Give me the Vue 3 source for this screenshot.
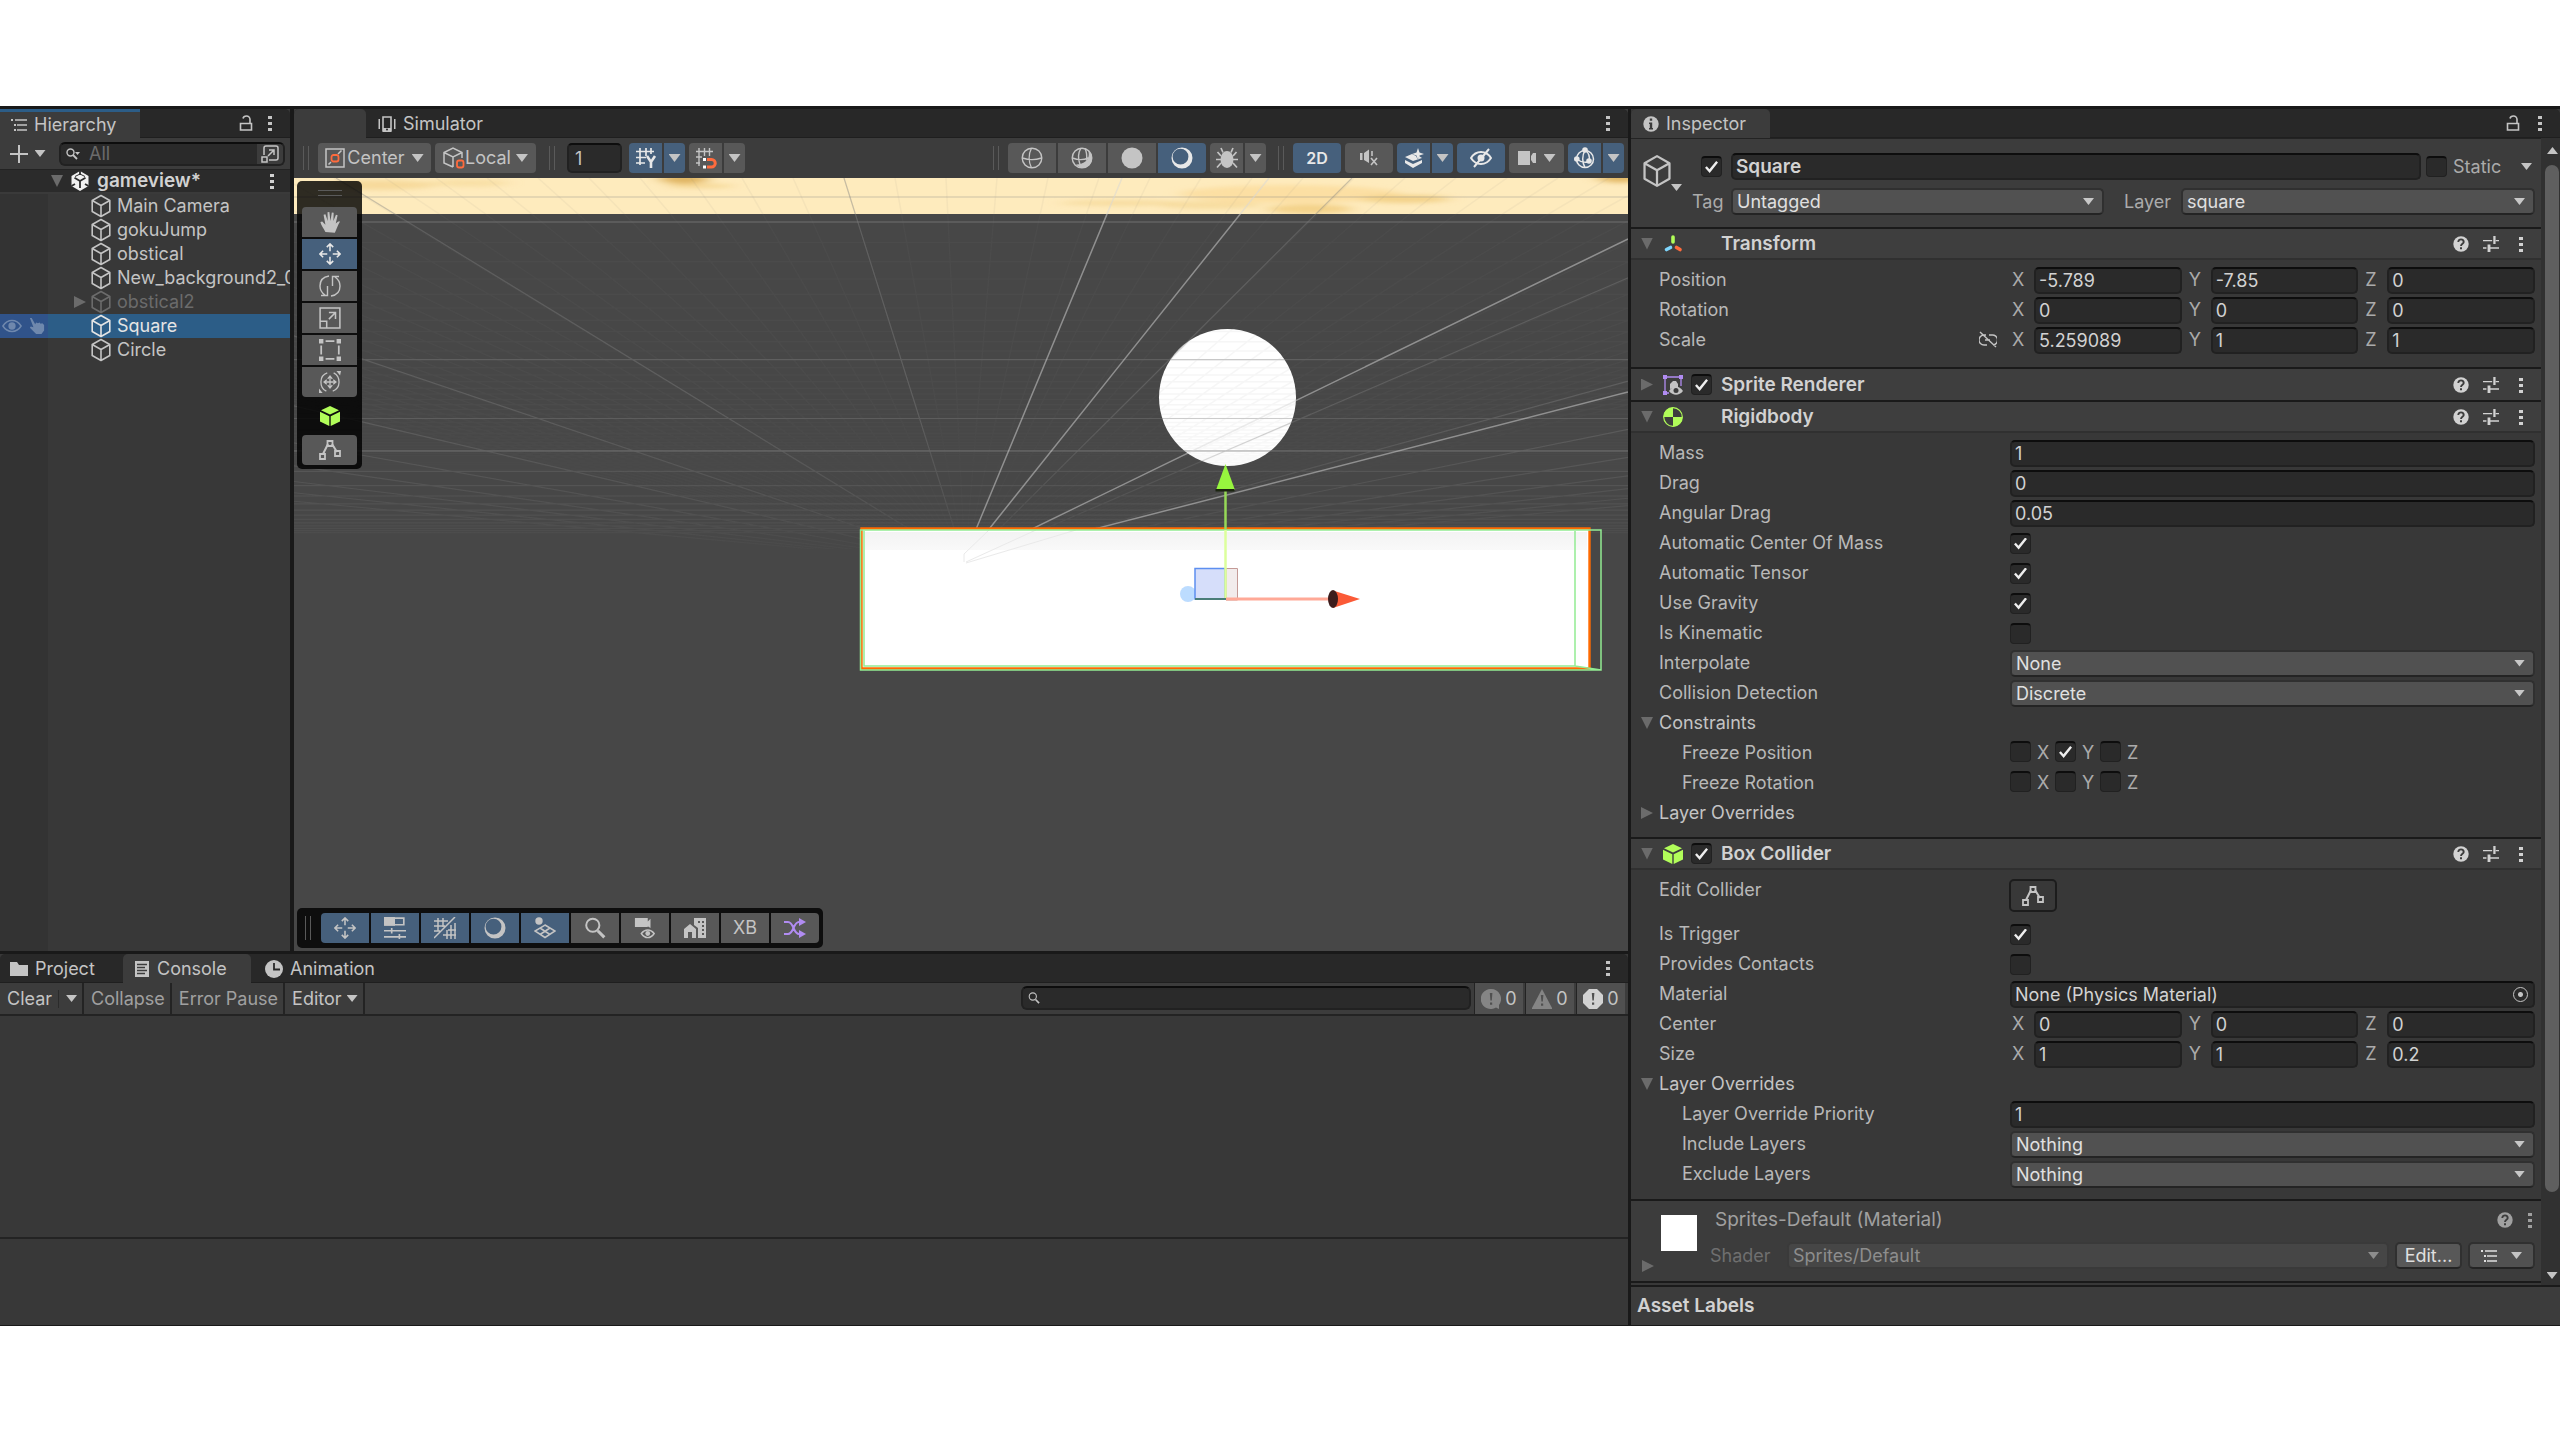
<template>
  <svg class="sprite" aria-hidden="true">
    <symbol id="i-cube" viewBox="0 0 20 24">
      <path d="M10 1.5 18.8 6.500v11L10 22.500 1.200 17.500v-11zM1.200 6.500 10 11.500l8.800-5M10 11.500v11" fill="none" stroke="currentColor" stroke-width="1.600" stroke-linejoin="round" />
    </symbol>
    <symbol id="i-collider" viewBox="0 0 20 20">
      <path d="M10 0 19 4.200 10 8.600 1 4.200zM0 5.800 9.300 10.200V20L0 15.500zM20 5.800 10.700 10.200V20L20 15.500z" fill="#b1fd59" />
    </symbol>
    <symbol id="i-unity" viewBox="0 0 20 20">
      <path d="M10 0 18.500 5v10L10 20 1.500 15V5z" fill="#f2f2f2" />
      <path d="M10 10V17M10 10 4.500 6.700M10 10l5.500-3.300M10 0v4M1.500 15l3.500-2M18.500 15 15 13" stroke="#2d2d2d" stroke-width="1.800" />
      <path d="M5 5.500 10 3l5 2.500" stroke="#2d2d2d" stroke-width="1" fill="none" />
    </symbol>
    <symbol id="i-tree" viewBox="0 0 16 14">
      <path d="M4 2h12M6 7h10M6 12h10" stroke="currentColor" stroke-width="1.400" />
      <path d="M0 1h2v2H0zM3 6h2v2H3zM3 11h2v2H3z" fill="currentColor" />
    </symbol>
    <symbol id="i-lock" viewBox="0 0 14 16">
      <path d="M1.500 8.500h11v6.500h-11zM11 8V4.500C11 2.500 9.500 1 7.500 1 5.500 1 4.300 2 4 3.500" fill="none" stroke="currentColor" stroke-width="1.600" />
    </symbol>
    <symbol id="i-kebab" viewBox="0 0 4 16">
      <path d="M0 1h4v3H0zM0 7h4v3H0zM0 13h4v3H0z" fill="currentColor" />
    </symbol>
    <symbol id="i-search" viewBox="0 0 20 20">
      <circle cx="8" cy="7.500" r="6" fill="none" stroke="currentColor" stroke-width="1.800" />
      <path d="m12.500 12.500 6 6" stroke="currentColor" stroke-width="2.800" />
    </symbol>
    <symbol id="i-search-drop" viewBox="0 0 14 12">
      <circle cx="4.500" cy="4.500" r="3.500" fill="none" stroke="currentColor" stroke-width="1.400" />
      <path d="m7 7 4 4" stroke="currentColor" stroke-width="1.800" /><path d="M9 4h5l-2.500 3z" fill="currentColor" />
    </symbol>
    <symbol id="i-popout" viewBox="0 0 18 18">
      <path d="M3 10V3c0-1 1-2 2-2h10c1 0 2 1 2 2v10c0 1-1 2-2 2H8M1 12h5v5H1zM7 11l6-6M8 5h5v5" fill="none" stroke="currentColor" stroke-width="1.500" />
    </symbol>
    <symbol id="i-phone" viewBox="0 0 18 16">
      <path d="M5 1h8v14H5z" fill="none" stroke="currentColor" stroke-width="1.600" />
      <path d="M5 12h8v4H5zM.500 3H2v10H.500zM16 3h1.500v10H16z" fill="currentColor" />
      <circle cx="9" cy="13.500" r="1" fill="#282828" />
    </symbol>
    <symbol id="i-pivot" viewBox="0 0 20 20">
      <path d="M1 1h18v18H1z" fill="none" stroke="currentColor" stroke-width="1.500" />
      <path d="M3.500 16.500 6 14M13 6l3.500-3.500" stroke="currentColor" stroke-width="1.500" />
      <rect x="6.500" y="7" width="7" height="6.500" rx="2" fill="none" stroke="#ff6b3d" stroke-width="1.800" />
    </symbol>
    <symbol id="i-local" viewBox="0 0 22 22">
      <path d="M10 20 1 16V5.500L10 1l9 4.500V11M1 5.500 10 10l9-4.500M10 10v10" fill="none" stroke="currentColor" stroke-width="1.500" />
      <rect x="14" y="13.500" width="6.500" height="7" rx="2" fill="none" stroke="#ff6b3d" stroke-width="1.800" />
    </symbol>
    <symbol id="i-gridy" viewBox="0 0 20 22">
      <path d="M4 1v17M10 1v8M15 1v6M0 4.500h18M0 10.500h10M0 16h9" stroke="currentColor" stroke-width="1.700" />
      <path d="m11 9 4 6 4-6M15 14v7" fill="none" stroke="currentColor" stroke-width="2.600" />
    </symbol>
    <symbol id="i-magnet" viewBox="0 0 20 22">
      <path d="M3 1v18M8.500 1v8M13.500 1v8M0 4.500h17M0 10h6M0 16h4" stroke="currentColor" stroke-width="1.400" />
      <path d="M11 12.500h4.500a3.500 3.500 0 0 1 0 7.500H11" fill="none" stroke="#ff6b3d" stroke-width="3" />
      <path d="M7 11h3v3H7zM7 18.500h3v3H7z" fill="#fff" />
    </symbol>
    <symbol id="i-globe" viewBox="0 0 22 22">
      <circle cx="11" cy="11" r="9.800" fill="none" stroke="currentColor" stroke-width="1.400" />
      <path d="M10.500 1c-3 6-3 14 0 20M1.500 11c6 2 13 2 19 0" fill="none" stroke="currentColor" stroke-width="1.400" />
    </symbol>
    <symbol id="i-globe-shaded" viewBox="0 0 22 22">
      <circle cx="11" cy="11" r="9.800" fill="none" stroke="currentColor" stroke-width="1.400" />
      <path d="M10 1c-3 5-3 11-1 16.500M1.500 11c5 2 11 2 16 0M14 1.500c2 4 2 8 1.500 12" fill="none" stroke="currentColor" stroke-width="1.400" />
      <path d="M17 3c2.500 7-1 14-12 14.500C11 24.500 21 20 21 11c0-3-1.500-6-4-8z" fill="currentColor" />
    </symbol>
    <symbol id="i-disc" viewBox="0 0 22 22"><circle cx="11" cy="11" r="10.500" fill="currentColor" /></symbol>
    <symbol id="i-moon" viewBox="0 0 22 22">
      <path d="M11 .500a10.500 10.500 0 1 0 0 21 10.500 10.500 0 0 0 0-21zM9.500 1.800a7.800 7.800 0 1 1 0 15.800A7.800 7.800 0 0 1 9.500 1.800z" fill="currentColor" fill-rule="evenodd" />
    </symbol>
    <symbol id="i-bug" viewBox="0 0 22 22">
      <ellipse cx="11" cy="12.500" rx="6.500" ry="8.500" fill="currentColor" />
      <path d="M7 5.500 5 1M15 5.500 17 1M5 9 1.500 5M17 9l3.500-4M5 12.500H0M17 12.500h5M5 16l-4 4.500M17 16l4 4.500" stroke="currentColor" stroke-width="1.700" fill="none" />
    </symbol>
    <symbol id="i-mute" viewBox="0 0 18 18">
      <path d="M0 4h2.500v7H0zM4 4l5-3.500V14l-5-3z" fill="currentColor" />
      <path d="m11 9 6 7M17 9l-6 7M12 2v5" stroke="currentColor" stroke-width="1.600" />
    </symbol>
    <symbol id="i-fx" viewBox="0 0 20 20">
      <path d="m14 0 1.500 4.500L20 6l-4.500 1.500L14 12l-1.500-4.500L8 6l4.500-1.500z" fill="currentColor" />
      <path d="M8 6 1 9l8 4 9-3-3-2-1 4-2-4zM1 12l8 4 9-4v3l-9 5-8-5z" fill="currentColor" />
    </symbol>
    <symbol id="i-eyeoff" viewBox="0 0 22 20">
      <path d="M1 10c5-8 15-8 20 0-5 8-15 8-20 0zM19 1 4 19" fill="none" stroke="currentColor" stroke-width="2" />
      <circle cx="11" cy="10" r="3.500" fill="currentColor" />
    </symbol>
    <symbol id="i-eye" viewBox="0 0 22 14">
      <path d="M1 7c5-8 15-8 20 0-5 8-15 8-20 0z" fill="none" stroke="currentColor" stroke-width="1.600" />
      <circle cx="11" cy="7" r="4" fill="currentColor" />
    </symbol>
    <symbol id="i-point" viewBox="0 0 18 18">
      <path d="M1 0h2l4 7 1-2 2 1 2-1 1 1.500 2-.500 2 2v6l-3 4H8l-7-7 1-1.500 3 1z" fill="currentColor" />
    </symbol>
    <symbol id="i-camera" viewBox="0 0 18 14">
      <path d="M0 0h12v14H0zM13 5l2-3h3v10h-3l-2-3z" fill="currentColor" />
    </symbol>
    <symbol id="i-gizmo" viewBox="0 0 22 22">
      <circle cx="11" cy="12" r="8.500" fill="none" stroke="currentColor" stroke-width="1.500" />
      <path d="M11 3c-3 6-3 12 0 17.500M2.500 12c4 3 9 4 13 2.500M11 3c4 3 5 7 4 11" fill="none" stroke="currentColor" stroke-width="1.500" />
      <circle cx="11" cy="3" r="2.800" fill="currentColor" /><circle cx="2.800" cy="12" r="2.800" fill="currentColor" /><circle cx="15" cy="14" r="2.800" fill="currentColor" />
    </symbol>
    <symbol id="i-hand" viewBox="0 0 22 24">
      <path d="M6 23C4 19 1 15 .500 12l2-.500L6 15 4 4l2-.500L8.500 11 8.300 1.300l2-.300L11.500 11l1.500-9.500 2 .300L14.700 11l2.800-7 1.800.700-2 9c3-3 4-3 4.500-2-2 3-4 9-5.500 12z" fill="currentColor" />
    </symbol>
    <symbol id="i-move" viewBox="0 0 24 24">
      <path d="M12 9V1M8.500 4.500 12 1l3.500 3.500M12 15v8M8.500 19.500 12 23l3.500-3.500M9 12H1M4.500 8.500 1 12l3.500 3.500M15 12h8M19.500 8.500 23 12l-3.500 3.500" fill="none" stroke="currentColor" stroke-width="1.700" />
    </symbol>
    <symbol id="i-rotate" viewBox="0 0 22 22">
      <path d="M10 1C3 2 1 7 1 11c0 4 2 7 5 9M8.500 11v9.500H2M12 21c7-1 9-6 9-10 0-4-2-7-5-9M13.500 11V1.500H20" fill="none" stroke="currentColor" stroke-width="1.400" />
    </symbol>
    <symbol id="i-scale" viewBox="0 0 20 20">
      <path d="M1 1h18v18H1zM1 13h6v6M9 11l6-6M9 5h6v6" fill="none" stroke="currentColor" stroke-width="1.400" />
    </symbol>
    <symbol id="i-rect" viewBox="0 0 20 20">
      <path d="M0 0h4v4H0zM16 0h4v4h-4zM0 16h4v4H0zM16 16h4v4h-4z" fill="currentColor" />
      <path d="M6 2h8M6 18h8M2 6v8M18 6v8" stroke="currentColor" stroke-width="1.600" />
    </symbol>
    <symbol id="i-transform" viewBox="0 0 24 24">
      <path d="M9 2C0 5 0 18 8 22M15 22c9-3 9-16 1-20M12 6v12M6 12h12M9.500 8.500 12 5.500l2.500 3M9.500 15.500l2.500 3 2.500-3M8.500 9.500 5.500 12l3 2.500M15.500 9.500l3 2.500-3 2.500" fill="none" stroke="currentColor" stroke-width="1.400" />
      <path d="M19 0h5l-1 5zM0 24v-5l4 5z" fill="currentColor" />
    </symbol>
    <symbol id="i-nodes" viewBox="0 0 22 20">
      <path d="M4 14 9 4M13 4l5 8" stroke="currentColor" stroke-width="2" />
      <path d="M8.500 1h5v5h-5zM1 14h5v5H1zM16 11h5v5h-5z" fill="none" stroke="currentColor" stroke-width="1.800" />
    </symbol>
    <symbol id="i-settings" viewBox="0 0 20 20">
      <path d="M1 1h17v6H1zM0 12.500h20M0 18h20M7 10v5M14 15.500v4.500" fill="none" stroke="currentColor" stroke-width="1.500" />
      <path d="M0 0h10v8H0z" fill="currentColor" />
    </symbol>
    <symbol id="i-gridoff" viewBox="0 0 22 22">
      <path d="M4 1v13M9 1v9M0 4h14M0 9h11M0 14h6M13 13v9M17 8v14M21 6v16M9 18h13M14 13h8M21 0 0 21" stroke="currentColor" stroke-width="1.500" />
    </symbol>
    <symbol id="i-plane" viewBox="0 0 22 22">
      <circle cx="5" cy="4" r="3.700" fill="currentColor" />
      <path d="m11 8 10 6-10 6.500L1 14zM6 11l10 6.500M16 11 6 17.500" fill="none" stroke="currentColor" stroke-width="1.500" />
    </symbol>
    <symbol id="i-cameye" viewBox="0 0 22 24">
      <path d="M0 1h14v4l3-3v10l-3-2v1H0z" fill="currentColor" />
      <path d="M7 18c4-5 10-5 14 0-4 6-10 6-14 0z" fill="none" stroke="currentColor" stroke-width="1.600" />
      <circle cx="14" cy="18" r="2.600" fill="currentColor" />
    </symbol>
    <symbol id="i-town" viewBox="0 0 22 20">
      <path d="M0 11 6 6l6 5v9H8v-6H4v6H0zM10 0h12v20h-8V10l-4-3z" fill="currentColor" />
      <path d="M14 4h2M18 4h2M18 8h2M18 12h2M18 16h2" stroke="#585858" stroke-width="2" />
    </symbol>
    <symbol id="i-shuffle" viewBox="0 0 22 20">
      <path d="M0 4h4c6 0 5 12 11 12h3M0 16h4c6 0 5-12 11-12h3" fill="none" stroke="#b18cf2" stroke-width="2" />
      <path d="m15 0 7 4-7 4zM15 12l7 4-7 4z" fill="#b18cf2" />
    </symbol>
    <symbol id="i-folder" viewBox="0 0 18 14"><path d="M0 0h7l2 3h9v11H0z" fill="currentColor" /></symbol>
    <symbol id="i-doc" viewBox="0 0 14 16">
      <path d="M0 0h14v16H0z" fill="currentColor" />
      <path d="M2 3.500h10M2 6.500h8M2 9.500h10M2 12.500h8" stroke="#3c3c3c" stroke-width="1.300" />
    </symbol>
    <symbol id="i-clock" viewBox="0 0 18 18">
      <circle cx="9" cy="9" r="9" fill="currentColor" /><path d="M9 3v6.500h6" fill="none" stroke="#282828" stroke-width="1.800" />
    </symbol>
    <symbol id="i-info" viewBox="0 0 16 16">
      <circle cx="8" cy="8" r="7.700" fill="currentColor" /><path d="M6.800 2.500h2.400v2.300H6.800zM6 6.500h3.200V12H10v1.500H6V12h.800V8H6z" fill="#3c3c3c" />
    </symbol>
    <symbol id="i-help" viewBox="0 0 16 16">
      <circle cx="8" cy="8" r="7.700" fill="currentColor" /><path d="M5.300 6C5.300 2.500 10.700 2.600 10.700 6 10.700 7.800 8 7.800 8 10" fill="none" stroke="#3c3c3c" stroke-width="1.900" /><path d="M7 11.300h2v2H7z" fill="#3c3c3c" />
    </symbol>
    <symbol id="i-preset" viewBox="0 0 14 14">
      <path d="M0 4h8M11 4h3M0 10.500h3M6 10.500h8" stroke="currentColor" stroke-width="1.200" /><path d="M9 0h2v7H9zM4 7.500h2.500V14H4z" fill="currentColor" />
    </symbol>
    <symbol id="i-unlink" viewBox="0 0 18 16">
      <path d="M7 3H5a4.500 4.500 0 0 0 0 10h3M10 3h3a4.500 4.500 0 0 1 1 10M1 0l16 15M6 8h5" fill="none" stroke="currentColor" stroke-width="1.400" />
    </symbol>
    <symbol id="i-axes" viewBox="0 0 20 20">
      <path d="M10 3v5" stroke="#b1fd59" stroke-width="3.600" stroke-linecap="round" /><path d="m7.500 13.500-4 2" stroke="#7fd6fd" stroke-width="3.600" stroke-linecap="round" /><path d="m13.500 13.500 3.500 2" stroke="#ff6b3d" stroke-width="3.600" stroke-linecap="round" />
    </symbol>
    <symbol id="i-sprite" viewBox="0 0 20 20">
      <path d="M2 2h16v9M2 2v16h4" fill="none" stroke="#b18cf2" stroke-width="1.300" /><path d="M0 0h4v4H0zM16 0h4v4h-4zM0 16h4v4H0z" fill="#b18cf2" />
      <path d="M7 14V9l3-3h3l2 3v3z" fill="#c4c4c4" /><path d="M6 16c4-6 10-6 14 0-4 5-10 5-14 0z" fill="#c4c4c4" /><circle cx="13" cy="15.500" r="2.500" fill="#3c3c3c" />
    </symbol>
    <symbol id="i-body" viewBox="0 0 20 20">
      <circle cx="10" cy="10" r="9.300" fill="none" stroke="#b1fd59" stroke-width="1.200" /><path d="M10 10V.500A9.500 9.500 0 0 0 .500 10zM10 10v9.500a9.500 9.500 0 0 0 9.500-9.500z" fill="#b1fd59" />
    </symbol>
    <symbol id="i-log" viewBox="0 0 20 20">
      <path d="M10 0a10 10 0 1 0 5 18.500l3 1.500V16A10 10 0 0 0 10 0z" fill="currentColor" /><path d="M8.800 4h2.600l-.600 7.500H9.400zM9 13.500h2.200v2.200H9z" fill="#505050" />
    </symbol>
    <symbol id="i-warn" viewBox="0 0 20 20">
      <path d="M10 0 20 19v1H0v-1z" fill="currentColor" /><path d="M8.800 6h2.600l-.600 6.500H9.400zM9 14.500h2.200v2.200H9z" fill="#505050" />
    </symbol>
    <symbol id="i-error" viewBox="0 0 20 20">
      <path d="M6 0h8l6 6v8l-6 6H6l-6-6V6z" fill="currentColor" /><path d="M8.800 4h2.600l-.600 7.500H9.400zM9 13.500h2.200v2.200H9z" fill="#505050" />
    </symbol>
  </svg>

  <main class="editor">
    <div class="workspace">
      <div class="upper">
        <section class="hierarchy">
          <header class="tabbar">
            <button class="tab active focused"><svg class="ic s16"><use href="#i-tree" /></svg>Hierarchy</button>
            <span class="spacer"></span>
            <button class="plain lock" aria-label="Lock"><svg class="ic s16"><use href="#i-lock" /></svg></button>
            <button class="plain kebab" aria-label="Hierarchy menu"><svg class="ic s16"><use href="#i-kebab" /></svg></button>
          </header>
          <div class="hierarchy-tools">
            <button class="plain add" aria-label="Create">
              <svg class="ic s20" viewBox="0 0 20 20"><path d="M10 1v18M1 10h18" stroke="currentColor" stroke-width="2" /></svg>
              <i class="tri small"></i>
            </button>
            <div class="search">
              <svg class="ic s14"><use href="#i-search-drop" /></svg>
              <input type="text" placeholder="All" aria-label="Search hierarchy" />
              <button class="plain pop" aria-label="Search window"><svg class="ic s18"><use href="#i-popout" /></svg></button>
            </div>
          </div>
          <div class="scene-row">
            <i class="tri fold"></i>
            <svg class="ic s20"><use href="#i-unity" /></svg>
            <b>gameview*</b>
            <span class="spacer"></span>
            <button class="plain kebab" aria-label="Scene menu"><svg class="ic s16"><use href="#i-kebab" /></svg></button>
          </div>
          <ul class="objects">
            <li
              v-for="item in objects"
              :key="item.name"
              :class="{ selected: item.name === selected, disabled: item.disabled }"
              @click="selected = item.name"
            >
              <span class="gutter">
                <template v-if="item.name === selected">
                  <svg class="ic s20"><use href="#i-eye" /></svg>
                  <svg class="ic s16"><use href="#i-point" /></svg>
                </template>
              </span>
              <span class="twist"><i v-if="item.children" class="tri fold closed"></i></span>
              <svg class="ic cube"><use href="#i-cube" /></svg>
              <span class="name">{{ item.name }}</span>
            </li>
          </ul>
        </section>

        <section class="scene">
          <header class="tabbar">
            <button class="tab active blank" aria-label="Scene"></button>
            <button class="tab"><svg class="ic s18"><use href="#i-phone" /></svg>Simulator</button>
            <span class="spacer"></span>
            <button class="plain kebab" aria-label="Scene view menu"><svg class="ic s16"><use href="#i-kebab" /></svg></button>
          </header>
          <div class="scene-tools">
            <span class="grip"></span>
            <button class="tool center"><svg class="ic s20"><use href="#i-pivot" /></svg>Center<i class="tri"></i></button>
            <button class="tool local"><svg class="ic s22"><use href="#i-local" /></svg>Local<i class="tri"></i></button>
            <span class="grip mid"></span>
            <input v-model="gridSize" class="grid-size" type="text" aria-label="Grid size" />
            <span class="pair">
              <button class="tool sq on" aria-label="Grid axis"><svg class="ic s22"><use href="#i-gridy" /></svg></button>
              <button class="tool arrow on" aria-label="Grid options"><i class="tri"></i></button>
            </span>
            <span class="pair">
              <button class="tool sq" aria-label="Snap"><svg class="ic s22"><use href="#i-magnet" /></svg></button>
              <button class="tool arrow" aria-label="Snap options"><i class="tri"></i></button>
            </span>
            <span class="spacer"></span>
            <span class="grip end"></span>
            <span class="pair">
              <button
                v-for="mode in drawModes"
                :key="mode.icon"
                class="tool mode"
                :class="{ on: mode.on }"
                :aria-label="mode.label"
              >
                <svg class="ic s22"><use :href="'#' + mode.icon" /></svg>
              </button>
            </span>
            <span class="pair">
              <button class="tool sq" aria-label="Debug draw"><svg class="ic s22"><use href="#i-bug" /></svg></button>
              <button class="tool arrow" aria-label="Debug options"><i class="tri"></i></button>
            </span>
            <span class="grip end"></span>
            <button class="tool mode on two-d">2D</button>
            <button class="tool mode" aria-label="Audio"><svg class="ic s18"><use href="#i-mute" /></svg></button>
            <span class="pair">
              <button class="tool sq on" aria-label="Effects"><svg class="ic s20"><use href="#i-fx" /></svg></button>
              <button class="tool arrow on" aria-label="Effect options"><i class="tri"></i></button>
            </span>
            <button class="tool mode on" aria-label="Hidden objects"><svg class="ic s22"><use href="#i-eyeoff" /></svg></button>
            <button class="tool cam" aria-label="Camera"><svg class="ic s18"><use href="#i-camera" /></svg><i class="tri"></i></button>
            <span class="pair">
              <button class="tool sq on" aria-label="Gizmos"><svg class="ic s22"><use href="#i-gizmo" /></svg></button>
              <button class="tool arrow on" aria-label="Gizmo options"><i class="tri"></i></button>
            </span>
          </div>

          <div class="viewport">
            <svg class="world" viewBox="294 178 1334 790" preserveAspectRatio="xMinYMin slice">
              <defs>
                <filter id="soft" x="-20%" y="-80%" width="140%" height="260%"><feGaussianBlur stdDeviation="8 2" /></filter>
                <clipPath id="sky"><path d="M294 178h1334v36H294z" /></clipPath>
                <linearGradient id="fade" gradientUnits="userSpaceOnUse" x1="0" y1="178" x2="0" y2="549">
                  <stop offset="0.600" stop-color="#fff" /><stop offset="0.900" stop-color="#777" /><stop offset="1" stop-color="#222" />
                </linearGradient>
                <mask id="ground" maskUnits="userSpaceOnUse" x="294" y="178" width="1334" height="371">
                  <path d="M294 178h1334v371H294z" fill="url(#fade)" />
                </mask>
                <linearGradient id="haze" x1="0" y1="0" x2="0" y2="1">
                  <stop offset="0" stop-color="#f3f3f3" /><stop offset="1" stop-color="#f9f9f9" />
                </linearGradient>
              </defs>
              <path d="M294 178h1334v790H294z" fill="#474747" />
              <g clip-path="url(#sky)">
                <path d="M294 178h1334v36H294z" fill="#feebbd" />
                <g filter="url(#soft)" fill="#f2cf85">
                  <ellipse cx="380" cy="185" rx="55" ry="5" opacity=".6" />
                  <ellipse cx="470" cy="183" rx="40" ry="4" opacity=".4" />
                  <ellipse cx="684" cy="179" rx="24" ry="5" fill="#e0b563" />
                  <ellipse cx="700" cy="186" rx="34" ry="2" opacity=".8" />
                  <ellipse cx="1120" cy="203" rx="60" ry="3" opacity=".5" />
                  <ellipse cx="1290" cy="194" rx="110" ry="9" fill="#fbdc9c" opacity=".8" />
                  <ellipse cx="1210" cy="205" rx="50" ry="4" opacity=".5" />
                  <ellipse cx="1310" cy="209" rx="42" ry="5" opacity=".9" />
                  <ellipse cx="1405" cy="199" rx="45" ry="4" opacity=".9" />
                  <ellipse cx="1620" cy="178" rx="22" ry="5" fill="#e3b968" />
                </g>
              </g>
              <ellipse cx="1227.500" cy="397.500" rx="68.500" ry="68.500" fill="#fff" />
              <g mask="url(#ground)" fill="none" stroke="#808080">
                <path :d="minorPath" stroke-opacity=".07" stroke-width="1.500" />
                <path :d="majorPath" stroke-opacity=".4" stroke-width="1.200" />
                <path d="M294 197h1334" stroke-opacity=".2" stroke-width="2" />
                <path d="M294 222h1334M294 451h1334" stroke-opacity=".35" stroke-width="2" />
              </g>
              <path d="M962 563 1122 178M962 563l307-385M962 563l666-324M962 563l666-171" stroke="#d8d8d8" stroke-opacity=".5" stroke-width="1.500" />

              <path d="M861 529h729v140H861z" fill="#fff" />
              <path d="M865 532h722v18H865z" fill="url(#haze)" />
              <path d="M964 562v-8l25-24M966 562l70-32M966 563l110-33" fill="none" stroke="#eaeaea" />
              <path d="M861.500 528.500h728v140h-728z" fill="none" stroke="#ff6a00" stroke-width="2.400" />
              <path d="M860.500 530h740.500v140h-740.500zM864 531v135h711V531M1575 666l26 4" fill="none" stroke="#92ec92" stroke-width="1.500" />
              <circle cx="1188" cy="594" r="8" fill="#bcdcff" />
              <path d="M1195 568.500h30v30.500h-30z" fill="#d6defa" stroke="#5d8ff0" stroke-width="1.500" />
              <path d="M1226 568.500h11.500V600H1226z" fill="#f2ecec" stroke="#c49a96" />
              <path d="M1195 599h31" stroke="#4b7d78" stroke-width="2" />
              <path d="M1225.500 530v68" stroke="#dcff9c" stroke-width="2.500" />
              <path d="M1225.500 490v39" stroke="#96d957" stroke-width="2.500" />
              <path d="M1225.500 464 1235 490h-19z" fill="#97f53e" />
              <path d="M1215.500 489h19v2.500h-19z" fill="#1b2510" />
              <path d="M1226 599h104" stroke="#ffa997" stroke-width="3" />
              <path d="M1333 590.500 1360 599l-27 9z" fill="#fb5a37" />
              <ellipse cx="1333" cy="599" rx="5" ry="9" fill="#3d1c1c" />
            </svg>

            <div class="palette">
              <span class="handle"></span>
              <div class="stack">
                <button
                  v-for="tool in tools"
                  :key="tool.icon"
                  class="tool"
                  :class="{ on: tool.on }"
                  :aria-label="tool.label"
                >
                  <svg class="ic s22"><use :href="'#' + tool.icon" /></svg>
                </button>
              </div>
              <svg class="ic s20 context"><use href="#i-collider" /></svg>
              <button class="tool alone" aria-label="Edit shape"><svg class="ic s22"><use href="#i-nodes" /></svg></button>
            </div>

            <div class="dock">
              <span class="grip"></span>
              <div class="stack">
                <button
                  v-for="tool in overlays"
                  :key="tool.label"
                  class="tool"
                  :class="{ on: tool.on }"
                  :aria-label="tool.label"
                >
                  <svg v-if="tool.icon" class="ic s22"><use :href="'#' + tool.icon" /></svg>
                  <template v-else>{{ tool.label }}</template>
                </button>
              </div>
            </div>
          </div>
        </section>
      </div>

      <section class="console">
        <header class="tabbar">
          <button class="tab project"><svg class="ic s18"><use href="#i-folder" /></svg>Project</button>
          <button class="tab active log"><svg class="ic s16"><use href="#i-doc" /></svg>Console</button>
          <button class="tab anim"><svg class="ic s18"><use href="#i-clock" /></svg>Animation</button>
          <span class="spacer"></span>
          <button class="plain kebab" aria-label="Console menu"><svg class="ic s16"><use href="#i-kebab" /></svg></button>
        </header>
        <div class="console-tools">
          <button class="flat clear">Clear</button>
          <button class="flat drop" aria-label="Clear options"><i class="tri small"></i></button>
          <button class="flat dim">Collapse</button>
          <button class="flat dim">Error Pause</button>
          <button class="flat">Editor<i class="tri small"></i></button>
          <span class="spacer"></span>
          <div class="search">
            <svg class="ic s12"><use href="#i-search" /></svg>
            <input type="text" aria-label="Search console" />
          </div>
          <button v-for="c in counters" :key="c.icon" class="counter" :class="{ lit: c.lit }" :aria-label="c.label">
            <svg class="ic s20"><use :href="'#' + c.icon" /></svg>{{ c.count }}
          </button>
        </div>
        <div class="log-list"></div>
        <div class="log-detail"></div>
      </section>
    </div>

    <aside class="inspector">
      <header class="tabbar">
        <button class="tab active"><svg class="ic s16"><use href="#i-info" /></svg>Inspector</button>
        <span class="spacer"></span>
        <button class="plain lock" aria-label="Lock inspector"><svg class="ic s16"><use href="#i-lock" /></svg></button>
        <button class="plain kebab" aria-label="Inspector menu"><svg class="ic s16"><use href="#i-kebab" /></svg></button>
      </header>
      <div class="scroll-area">
        <div class="components">
          <div class="object-head">
            <button class="plain object-icon" aria-label="Object icon">
              <svg class="ic big"><use href="#i-cube" /></svg><i class="tri small"></i>
            </button>
            <div class="object-fields">
              <div class="line">
                <input v-model="active" class="check own" type="checkbox" aria-label="Active" />
                <input v-model="objectName" class="field title" type="text" aria-label="Name" />
                <input id="static" class="check" type="checkbox" />
                <label for="static" class="static">Static</label>
                <i class="tri small"></i>
              </div>
              <div class="line second">
                <label for="tag" class="tag">Tag</label>
                <span class="select grow"><select id="tag"><option>Untagged</option></select></span>
                <label for="layer" class="layer">Layer</label>
                <span class="select layer-select"><select id="layer"><option>square</option></select></span>
              </div>
            </div>
          </div>

          <section v-for="comp in components" :key="comp.title" class="component">
            <header>
              <button class="plain fold-btn" :aria-label="'Fold ' + comp.title" @click="comp.open = !comp.open">
                <i class="tri fold" :class="{ closed: !comp.open }"></i>
              </button>
              <svg class="ic s20"><use :href="'#' + comp.icon" /></svg>
              <span class="enable">
                <input v-if="comp.toggle" class="check" type="checkbox" checked :aria-label="'Enable ' + comp.title" />
              </span>
              <b>{{ comp.title }}</b>
              <span class="spacer"></span>
              <button class="plain" aria-label="Help"><svg class="ic s16"><use href="#i-help" /></svg></button>
              <button class="plain" aria-label="Presets"><svg class="ic s16"><use href="#i-preset" /></svg></button>
              <button class="plain" aria-label="Menu"><svg class="ic s16"><use href="#i-kebab" /></svg></button>
            </header>
            <div v-if="comp.open" class="component-body" :class="comp.icon">
              <div v-for="row in comp.rows" :key="row.id" class="row" :class="['row-' + row.type, { indent: row.indent }]">
                <button v-if="row.type === 'fold'" class="plain foldout">
                  <i class="tri fold" :class="{ closed: row.closed }"></i>{{ row.label }}
                </button>
                <template v-else>
                  <label :for="row.id">{{ row.label }}</label>
                  <svg v-if="row.link" class="ic s18 link"><use href="#i-unlink" /></svg>
                  <div class="value">
                    <template v-if="row.type === 'vec'">
                      <span v-for="(axis, i) in axes" :key="axis" class="axis">
                        <label :for="i ? row.id + axis : row.id">{{ axis }}</label>
                        <input :id="i ? row.id + axis : row.id" v-model="row.values[i]" class="field" type="text" />
                      </span>
                    </template>
                    <input v-else-if="row.type === 'text'" :id="row.id" v-model="row.value" class="field" type="text" />
                    <input v-else-if="row.type === 'check'" :id="row.id" v-model="row.value" class="check" type="checkbox" />
                    <span v-else-if="row.type === 'select'" class="select grow">
                      <select :id="row.id"><option>{{ row.value }}</option></select>
                    </span>
                    <template v-else-if="row.type === 'freeze'">
                      <span v-for="(axis, i) in axes" :key="axis" class="freeze-axis">
                        <input :id="i ? row.id + axis : row.id" v-model="row.values[i]" class="check" type="checkbox" />
                        <label :for="i ? row.id + axis : row.id">{{ axis }}</label>
                      </span>
                    </template>
                    <span v-else-if="row.type === 'object'" class="object-field">
                      <input :id="row.id" v-model="row.value" class="field" type="text" readonly />
                      <span class="picker"></span>
                    </span>
                    <button v-else :id="row.id" class="edit-shape"><svg class="ic s22"><use href="#i-nodes" /></svg></button>
                  </div>
                </template>
              </div>
            </div>
          </section>

          <section class="material">
            <div class="swatch"></div>
            <button class="plain mat-fold" aria-label="Unfold material"><i class="tri fold closed"></i></button>
            <div class="mat-main">
              <div class="mat-title">
                <span>Sprites-Default (Material)</span>
                <span class="spacer"></span>
                <button class="plain" aria-label="Material help"><svg class="ic s16"><use href="#i-help" /></svg></button>
                <button class="plain" aria-label="Material menu"><svg class="ic s16"><use href="#i-kebab" /></svg></button>
              </div>
              <div class="mat-shader">
                <label for="shader">Shader</label>
                <span class="select grow faded"><select id="shader" disabled><option>Sprites/Default</option></select></span>
                <button class="small-btn">Edit...</button>
                <button class="small-btn list" aria-label="Shader list"><svg class="ic s16"><use href="#i-tree" /></svg><i class="tri small"></i></button>
              </div>
            </div>
          </section>
          <div class="end-line"></div>
        </div>
        <div class="scrollbar"><i class="tri small up"></i><span class="thumb"></span><i class="tri small"></i></div>
      </div>
      <footer class="asset-labels">Asset Labels</footer>
    </aside>
  </main>
</template>

<script setup>
import { ref, reactive } from "vue";

const selected = ref("Square");
const objectName = ref("Square");
const active = ref(true);
const gridSize = ref("1");
const axes = ["X", "Y", "Z"];

const objects = [
  { name: "Main Camera" },
  { name: "gokuJump" },
  { name: "obstical" },
  { name: "New_background2_0" },
  { name: "obstical2", disabled: true, children: true },
  { name: "Square" },
  { name: "Circle" },
];

const drawModes = [
  { icon: "i-globe", label: "Wireframe" },
  { icon: "i-globe-shaded", label: "Shaded wireframe" },
  { icon: "i-disc", label: "Unlit" },
  { icon: "i-moon", label: "Shaded", on: true },
];

const tools = [
  { icon: "i-hand", label: "View" },
  { icon: "i-move", label: "Move", on: true },
  { icon: "i-rotate", label: "Rotate" },
  { icon: "i-scale", label: "Scale" },
  { icon: "i-rect", label: "Rect" },
  { icon: "i-transform", label: "Transform" },
];

const overlays = [
  { icon: "i-move", label: "Tools", on: true },
  { icon: "i-settings", label: "Tool settings", on: true },
  { icon: "i-gridoff", label: "Grid and snap", on: true },
  { icon: "i-moon", label: "Draw modes", on: true },
  { icon: "i-plane", label: "View options", on: true },
  { icon: "i-search", label: "Search" },
  { icon: "i-cameye", label: "Cameras" },
  { icon: "i-town", label: "Environment" },
  { label: "XB" },
  { icon: "i-shuffle", label: "Shuffle" },
];

const counters = [
  { icon: "i-log", label: "Messages", count: 0 },
  { icon: "i-warn", label: "Warnings", count: 0 },
  { icon: "i-error", label: "Errors", count: 0, lit: true },
];

const components = reactive([
  {
    title: "Transform",
    icon: "i-axes",
    open: true,
    rows: [
      { id: "position", type: "vec", label: "Position", values: ["-5.789", "-7.85", "0"] },
      { id: "rotation", type: "vec", label: "Rotation", values: ["0", "0", "0"] },
      { id: "scale", type: "vec", label: "Scale", values: ["5.259089", "1", "1"], link: true },
    ],
  },
  { title: "Sprite Renderer", icon: "i-sprite", toggle: true, open: false, rows: [] },
  {
    title: "Rigidbody",
    icon: "i-body",
    open: true,
    rows: [
      { id: "mass", type: "text", label: "Mass", value: "1" },
      { id: "drag", type: "text", label: "Drag", value: "0" },
      { id: "angular", type: "text", label: "Angular Drag", value: "0.05" },
      { id: "autocenter", type: "check", label: "Automatic Center Of Mass", value: true },
      { id: "autotensor", type: "check", label: "Automatic Tensor", value: true },
      { id: "gravity", type: "check", label: "Use Gravity", value: true },
      { id: "kinematic", type: "check", label: "Is Kinematic", value: false },
      { id: "interpolate", type: "select", label: "Interpolate", value: "None" },
      { id: "collision", type: "select", label: "Collision Detection", value: "Discrete" },
      { id: "constraints", type: "fold", label: "Constraints" },
      { id: "freezepos", type: "freeze", label: "Freeze Position", values: [false, true, false], indent: true },
      { id: "freezerot", type: "freeze", label: "Freeze Rotation", values: [false, false, false], indent: true },
      { id: "bodylayers", type: "fold", label: "Layer Overrides", closed: true },
    ],
  },
  {
    title: "Box Collider",
    icon: "i-collider",
    toggle: true,
    open: true,
    rows: [
      { id: "editcollider", type: "shape", label: "Edit Collider" },
      { id: "trigger", type: "check", label: "Is Trigger", value: true },
      { id: "contacts", type: "check", label: "Provides Contacts", value: false },
      { id: "material", type: "object", label: "Material", value: "None (Physics Material)" },
      { id: "center", type: "vec", label: "Center", values: ["0", "0", "0"] },
      { id: "size", type: "vec", label: "Size", values: ["1", "1", "0.2"] },
      { id: "boxlayers", type: "fold", label: "Layer Overrides" },
      { id: "priority", type: "text", label: "Layer Override Priority", value: "1", indent: true },
      { id: "include", type: "select", label: "Include Layers", value: "Nothing", indent: true },
      { id: "exclude", type: "select", label: "Exclude Layers", value: "Nothing", indent: true },
    ],
  },
]);

// Perspective grid: rows recede to the horizon, columns fan out of the vanishing point
const vanish = { x: 965, y: 563 };
const gridRow = (n) => `M294 ${(vanish.y - 500 / (1.46 + n)).toFixed(1)}H1628`;
const gridColumn = (x) => `M${x} 178L${vanish.x} ${vanish.y}`;

const major = [];
for (let n = 1; n < 16; n++) major.push(gridRow(n));
for (let n = -8; n <= 9; n++) major.push(gridColumn(844 + n * 508));
const majorPath = major.join("");

const minor = [];
for (let n = 1; n < 40; n++) minor.push(gridRow(n / 10));
for (let n = -30; n <= 34; n++) minor.push(gridColumn(844 + n * 51));
const minorPath = minor.join("");
</script>

<style>
body {
  margin: 0;
  background: #fff;
}
</style>

<style scoped>
* {
  box-sizing: border-box;
}

.sprite {
  position: absolute;
  width: 0;
  height: 0;
}

.editor {
  display: grid;
  grid-template-columns: minmax(0, 1fr) 929px;
  gap: 3px;
  margin-top: 106px;
  padding: 3px 0 1px;
  background: #191919;
  color: #c4c4c4;
  font: 18px/24px Inter, "Liberation Sans", sans-serif;
}

button,
input,
select {
  margin: 0;
  padding: 0;
  border: 0;
  background: none;
  color: inherit;
  font: inherit;
}

.ic {
  display: block;
  flex: none;
}
.s12 { width: 12px; height: 12px; }
.s14 { width: 14px; height: 14px; }
.s16 { width: 16px; height: 16px; }
.s18 { width: 18px; height: 18px; }
.s20 { width: 20px; height: 20px; }
.s22 { width: 22px; height: 22px; }

.plain {
  display: flex;
  align-items: center;
  justify-content: center;
}

.spacer {
  flex: 1;
}

.tri {
  flex: none;
  width: 12px;
  height: 8px;
  background: #c4c4c4;
  clip-path: polygon(0 0, 100% 0, 50% 100%);
}
.tri.small {
  width: 11px;
  height: 7px;
}
.tri.up {
  transform: rotate(180deg);
}
.tri.fold {
  width: 12px;
  height: 12px;
  background: #6b6b6b;
}
.tri.closed {
  clip-path: polygon(0 0, 100% 50%, 0 100%);
}

/* tabs */
.tabbar {
  display: flex;
  height: 29px;
  background: #282828;
  border-bottom: 1px solid #1f1f1f;
  border-radius: 5px 5px 0 0;
}
.tab {
  display: flex;
  align-items: center;
  gap: 7px;
  height: 29px;
  padding: 1px 12px 0;
  border-radius: 5px 5px 0 0;
}
.tab.active {
  background: #3c3c3c;
}
.tab.focused {
  padding: 0 24px 0 11px;
  border-top: 3px solid #2c5d87;
  border-radius: 0;
}
.tab.blank {
  width: 72px;
}
.kebab,
.lock {
  width: 24px;
}
.tabbar .kebab {
  margin-right: 8px;
}

.workspace {
  display: flex;
  flex-direction: column;
  gap: 3px;
  min-width: 0;
}
.upper {
  display: flex;
  flex: 1;
  gap: 4px;
  min-height: 0;
}

/* hierarchy */
.hierarchy {
  display: flex;
  flex: none;
  flex-direction: column;
  width: 290px;
  background: linear-gradient(90deg, #333 48px, #383838 48px);
}
.hierarchy-tools {
  display: flex;
  align-items: center;
  height: 31px;
  padding: 0 5px 0 9px;
  background: #3c3c3c;
}
.add {
  flex: none;
  gap: 6px;
  width: 36px;
}
.search {
  display: flex;
  align-items: center;
  min-width: 0;
  height: 24px;
  border: 2px solid #212121;
  border-top-color: #0d0d0d;
  border-radius: 6px;
  background: #2a2a2a;
}
.search .ic {
  margin-left: 5px;
}
.search input {
  flex: 1;
  min-width: 0;
  height: 20px;
}
.search input::placeholder {
  color: #6b6b6b;
  opacity: 1;
}
.hierarchy-tools .search {
  flex: 1;
  margin-left: 14px;
}
.hierarchy-tools .search input {
  padding-left: 9px;
}
.search .pop {
  flex: none;
  width: 26px;
  height: 20px;
  border-radius: 0 4px 4px 0;
  background: #3c3c3c;
}
.search .pop .ic {
  margin: 0;
}
.scene-row {
  display: flex;
  align-items: center;
  gap: 7px;
  height: 25px;
  padding: 0 6px 0 51px;
  border-top: 1px solid #232323;
  border-bottom: 2px solid #3a3a3a;
  background: #2b2b2b;
  color: #d2d2d2;
}
.scene-row b,
.component b {
  font-size: 19px;
  font-weight: 600;
}
.component b {
  padding-top: 1px;
}
.objects {
  margin: 0;
  padding: 0;
  list-style: none;
}
.objects li {
  display: flex;
  align-items: center;
  height: 24px;
}
.objects .gutter {
  display: flex;
  align-items: center;
  gap: 7px;
  width: 48px;
  height: 24px;
  padding-left: 2px;
}
.objects .twist {
  width: 43px;
  padding-left: 26px;
}
.objects .twist .tri {
  display: block;
}
.cube {
  width: 20px;
  height: 24px;
}
.objects .name {
  flex: 1;
  min-width: 0;
  margin-left: 6px;
  overflow: hidden;
  white-space: nowrap;
}
.objects .disabled {
  color: #6b6b6b;
}
.objects .selected {
  background: #2c5d87;
  color: #e4e4e4;
}
.selected .gutter {
  background: #30538a;
  color: #6f88ad;
}

/* scene */
.scene {
  display: flex;
  flex: 1;
  flex-direction: column;
  min-width: 0;
  background: #3c3c3c;
}
.scene-tools {
  display: flex;
  align-items: center;
  gap: 4px;
  height: 40px;
  padding: 0 4px 0 9px;
}
.grip {
  flex: none;
  width: 6px;
  height: 24px;
  margin-right: 5px;
  border: solid #5a5a5a;
  border-width: 0 1px;
}
.grip.mid {
  margin: 0 8px 0 9px;
}
.grip.end {
  margin: 0 5px 0 8px;
}
.tool {
  display: flex;
  align-items: center;
  justify-content: center;
  height: 30px;
  padding: 0;
  border-radius: 4px;
  background: #585858;
}
.tool .tri {
  margin-left: 5px;
}
.tool.center {
  gap: 2px;
  width: 113px;
}
.tool.local {
  width: 101px;
}
.tool.on {
  background: #46607c;
  color: #e8e8e8;
}
.tool.sq {
  width: 33px;
}
.tool.arrow {
  width: 21px;
}
.tool.arrow .tri {
  margin: 0;
}
.tool.mode {
  width: 48px;
}
.tool.two-d {
  font-size: 16px;
  font-weight: 600;
}
.tool.cam {
  width: 55px;
}
.tool.cam .ic {
  margin-right: 3px;
}
.pair {
  display: flex;
  gap: 2px;
}
.pair .tool {
  border-radius: 0;
}
.pair .tool:first-child {
  border-radius: 4px 0 0 4px;
}
.pair .tool:last-child {
  border-radius: 0 4px 4px 0;
}
.grid-size {
  width: 55px;
  height: 30px;
  margin-right: 3px;
  padding-left: 6px;
  border: 2px solid #212121;
  border-top-color: #0d0d0d;
  border-radius: 5px;
  background: #2a2a2a;
}
.viewport {
  position: relative;
  flex: 1;
  min-height: 0;
  overflow: hidden;
}
.world {
  position: absolute;
  width: 100%;
  height: 100%;
}
.palette {
  position: absolute;
  top: 3px;
  left: 3px;
  display: flex;
  flex-direction: column;
  width: 65px;
  padding: 9px 5px 4px;
  border-radius: 5px;
  background: rgba(0, 0, 0, 0.82);
}
.handle {
  align-self: center;
  width: 24px;
  height: 6px;
  margin-bottom: 11px;
  border: solid #5a5a5a;
  border-width: 1px 0;
}
.stack {
  display: flex;
  gap: 2px;
}
.palette .stack {
  flex-direction: column;
}
.stack .tool {
  border-radius: 0;
}
.palette .stack .tool:first-child {
  border-radius: 4px 4px 0 0;
}
.palette .stack .tool:last-child {
  border-radius: 0 0 4px 4px;
}
.context {
  align-self: center;
  margin: 9px 0;
}
.dock {
  position: absolute;
  bottom: 3px;
  left: 3px;
  display: flex;
  align-items: center;
  padding: 5px 4px 5px 8px;
  border-radius: 5px;
  background: #0e0e0e;
}
.dock .grip {
  margin-right: 10px;
}
.dock .tool {
  width: 48px;
  color: #c4c4c4;
}
.dock .tool:first-child {
  border-radius: 4px 0 0 4px;
}
.dock .tool:last-child {
  border-radius: 0 4px 4px 0;
}

/* console */
.console {
  display: flex;
  flex-direction: column;
  height: 371px;
  background: #383838;
}
.tab.project {
  width: 123px;
  padding-left: 10px;
}
.tab.log {
  width: 128px;
  padding-left: 11px;
}
.tab.anim {
  padding-left: 14px;
}
.console-tools {
  display: flex;
  gap: 2px;
  height: 33px;
  padding: 0 3px 0 2px;
  border-bottom: 2px solid #232323;
  background: #3c3c3c;
}
.flat {
  display: flex;
  align-items: center;
  gap: 5px;
  padding: 0 5px;
  border-right: 2px solid #232323;
}
.flat.clear {
  padding-right: 7px;
  border: 0;
  background: linear-gradient(#2b2b2b, #2b2b2b) right center / 1px 18px no-repeat;
}
.flat.dim {
  color: #a0a0a0;
}
.console-tools .search {
  flex: 0 1 450px;
  margin: 3px 1px 0 0;
}
.counter {
  display: flex;
  align-items: center;
  justify-content: center;
  gap: 4px;
  width: 49px;
  border-left: 1px solid #232323;
  background: #505050;
}
.counter .ic {
  color: #858585;
}
.counter.lit .ic {
  color: #d2d2d2;
}
.log-list {
  flex: 1;
}
.log-detail {
  height: 88px;
  border-top: 2px solid #232323;
}

/* inspector */
.inspector {
  display: flex;
  flex-direction: column;
  background: #383838;
}
.inspector .tab {
  padding: 0 24px 0 12px;
}
.inspector .tabbar .lock {
  margin-right: 3px;
}
.inspector .tabbar .kebab {
  margin-right: 8px;
}
.scroll-area {
  display: flex;
}
.components {
  flex: 1;
  min-width: 0;
}
.scrollbar {
  display: flex;
  flex-direction: column;
  align-items: center;
  width: 19px;
  padding: 9px 0 6px 3px;
  background: #313131;
}
.thumb {
  flex: 1;
  width: 14px;
  margin: 11px 0 80px;
  border-radius: 7px;
  background: #5f5f5f;
}
.object-head {
  display: flex;
  height: 89px;
  padding: 14px 6px 0 10px;
  border-top: 1px solid #232323;
  background: #3c3c3c;
}
.object-icon {
  position: relative;
  width: 32px;
  height: 36px;
}
.big {
  width: 32px;
  height: 34px;
}
.object-icon .tri {
  position: absolute;
  right: -9px;
  bottom: -2px;
}
.object-fields {
  flex: 1;
}
.line {
  display: flex;
  align-items: center;
  height: 27px;
}
.line.second {
  margin-top: 8px;
}
.own {
  margin: 0 9px 0 28px;
}
.field {
  width: 100%;
  min-width: 0;
  height: 27px;
  padding: 0 3px;
  border: 2px solid #212121;
  border-top-color: #0d0d0d;
  border-radius: 5px;
  background: #2a2a2a;
  color: #d2d2d2;
}
.title {
  flex: 1;
  font-size: 19px;
  font-weight: 600;
}
.title + .check {
  margin-left: 5px;
}
.static {
  width: 68px;
  margin-left: 6px;
}
.line .tri {
  margin-right: 3px;
}
.object-fields label {
  color: #ababab;
}
.tag {
  width: 39px;
  margin-left: 19px;
}
.layer {
  width: 57px;
  margin-left: 20px;
}
.layer-select {
  width: 354px;
}
.check {
  flex: none;
  appearance: none;
  width: 21px;
  height: 21px;
  border: 1px solid #212121;
  border-top: 2px solid #0d0d0d;
  border-radius: 4px;
  background: #2a2a2a;
}
.check:checked::before {
  content: "";
  display: block;
  width: 13px;
  height: 12px;
  margin: 3px 0 0 3px;
  background: #eee;
  clip-path: polygon(0 56%, 14% 44%, 34% 68%, 86% 0, 100% 12%, 36% 100%);
}
.select {
  position: relative;
  display: flex;
}
.grow {
  flex: 1;
}
.select select {
  appearance: none;
  width: 100%;
  height: 27px;
  padding: 0 24px 1px 4px;
  border: 2px solid #303030;
  border-bottom-color: #242424;
  border-radius: 5px;
  background: #515151;
  color: #e0e0e0;
}
.select::after {
  content: "";
  position: absolute;
  top: 10px;
  right: 10px;
  width: 11px;
  height: 7px;
  background: #c8c8c8;
  clip-path: polygon(0 0, 100% 0, 50% 100%);
  pointer-events: none;
}

.component {
  border-top: 2px solid #1a1a1a;
}
.component header {
  display: flex;
  align-items: center;
  height: 31px;
  padding-right: 11px;
  background: #3e3e3e;
  color: #d2d2d2;
}
.component header .plain {
  width: 30px;
}
.component header .fold-btn {
  width: 32px;
}
.component header .plain:last-child {
  width: 18px;
  margin-left: 6px;
}
.component header:has(+ .component-body) {
  border-bottom: 2px solid #303030;
}
.enable {
  width: 38px;
  padding-left: 8px;
}
.enable .check {
  display: block;
}
.component-body {
  padding: 5px 6px 10px 28px;
}
.component-body.i-axes {
  padding-bottom: 12px;
}
.component-body.i-body {
  padding-bottom: 9px;
}
.row {
  position: relative;
  display: flex;
  align-items: center;
  height: 30px;
}
.row > label {
  width: 351px;
  color: #b8b8b8;
}
.row.indent > label {
  padding-left: 23px;
}
.value {
  display: flex;
  flex: 1;
  align-items: center;
}
.value label {
  color: #ababab;
}
.link {
  position: absolute;
  left: 320px;
}
.row-vec .value {
  gap: 5px;
}
.axis {
  display: flex;
  flex: 1;
  align-items: center;
}
.axis label {
  flex: none;
  width: 24px;
  padding-left: 2px;
}
.freeze-axis {
  display: flex;
  width: 45px;
  gap: 6px;
}
.foldout {
  gap: 6px;
  margin-left: -18px;
}
.row-shape {
  align-items: flex-start;
  height: 44px;
}
.row-shape > label {
  line-height: 30px;
}
.edit-shape {
  display: flex;
  align-items: center;
  justify-content: center;
  width: 48px;
  height: 33px;
  margin: 4px 0 0 -1px;
  border: 2px solid #1c1c1c;
  border-radius: 5px;
}
.object-field {
  position: relative;
  display: flex;
  flex: 1;
}
.picker {
  position: absolute;
  top: 6px;
  right: 7px;
  width: 15px;
  height: 15px;
  border: 1px solid #c4c4c4;
  border-radius: 50%;
  background: radial-gradient(circle, #c4c4c4 2px, transparent 3px);
}

.material {
  position: relative;
  display: flex;
  height: 82px;
  border-top: 2px solid #1a1a1a;
  background: #3c3c3c;
}
.swatch {
  width: 36px;
  height: 36px;
  margin: 14px 0 0 30px;
  background: #fff;
}
.mat-fold {
  position: absolute;
  bottom: 9px;
  left: 11px;
}
.mat-main {
  flex: 1;
  padding: 5px 6px 0 13px;
}
.mat-title {
  display: flex;
  align-items: center;
  height: 28px;
  padding-left: 5px;
  color: #a0a0a0;
  font-size: 19px;
}
.mat-title .plain {
  width: 24px;
}
.mat-title .plain:last-child {
  width: 25px;
  margin-right: -7px;
}
.mat-shader {
  display: flex;
  align-items: center;
  gap: 6px;
  margin-top: 8px;
}
.mat-shader label {
  width: 71px;
  color: #6f6f6f;
}
.select.faded select {
  border-color: #3a3a3a;
  background: #464646;
  color: #8d8d8d;
  opacity: 1;
}
.select.faded::after {
  background: #8d8d8d;
}
.small-btn {
  display: flex;
  align-items: center;
  justify-content: center;
  gap: 14px;
  width: 67px;
  height: 27px;
  border: 2px solid #303030;
  border-bottom-color: #242424;
  border-radius: 5px;
  background: #585858;
  color: #e0e0e0;
}
.small-btn.list {
  background: #515151;
}
.end-line {
  height: 4px;
  border-top: 2px solid #1a1a1a;
}
.asset-labels {
  height: 40px;
  padding: 7px 6px 0;
  border-top: 2px solid #1a1a1a;
  background: #3c3c3c;
  color: #d2d2d2;
  font-size: 19px;
  font-weight: 600;
}
</style>
